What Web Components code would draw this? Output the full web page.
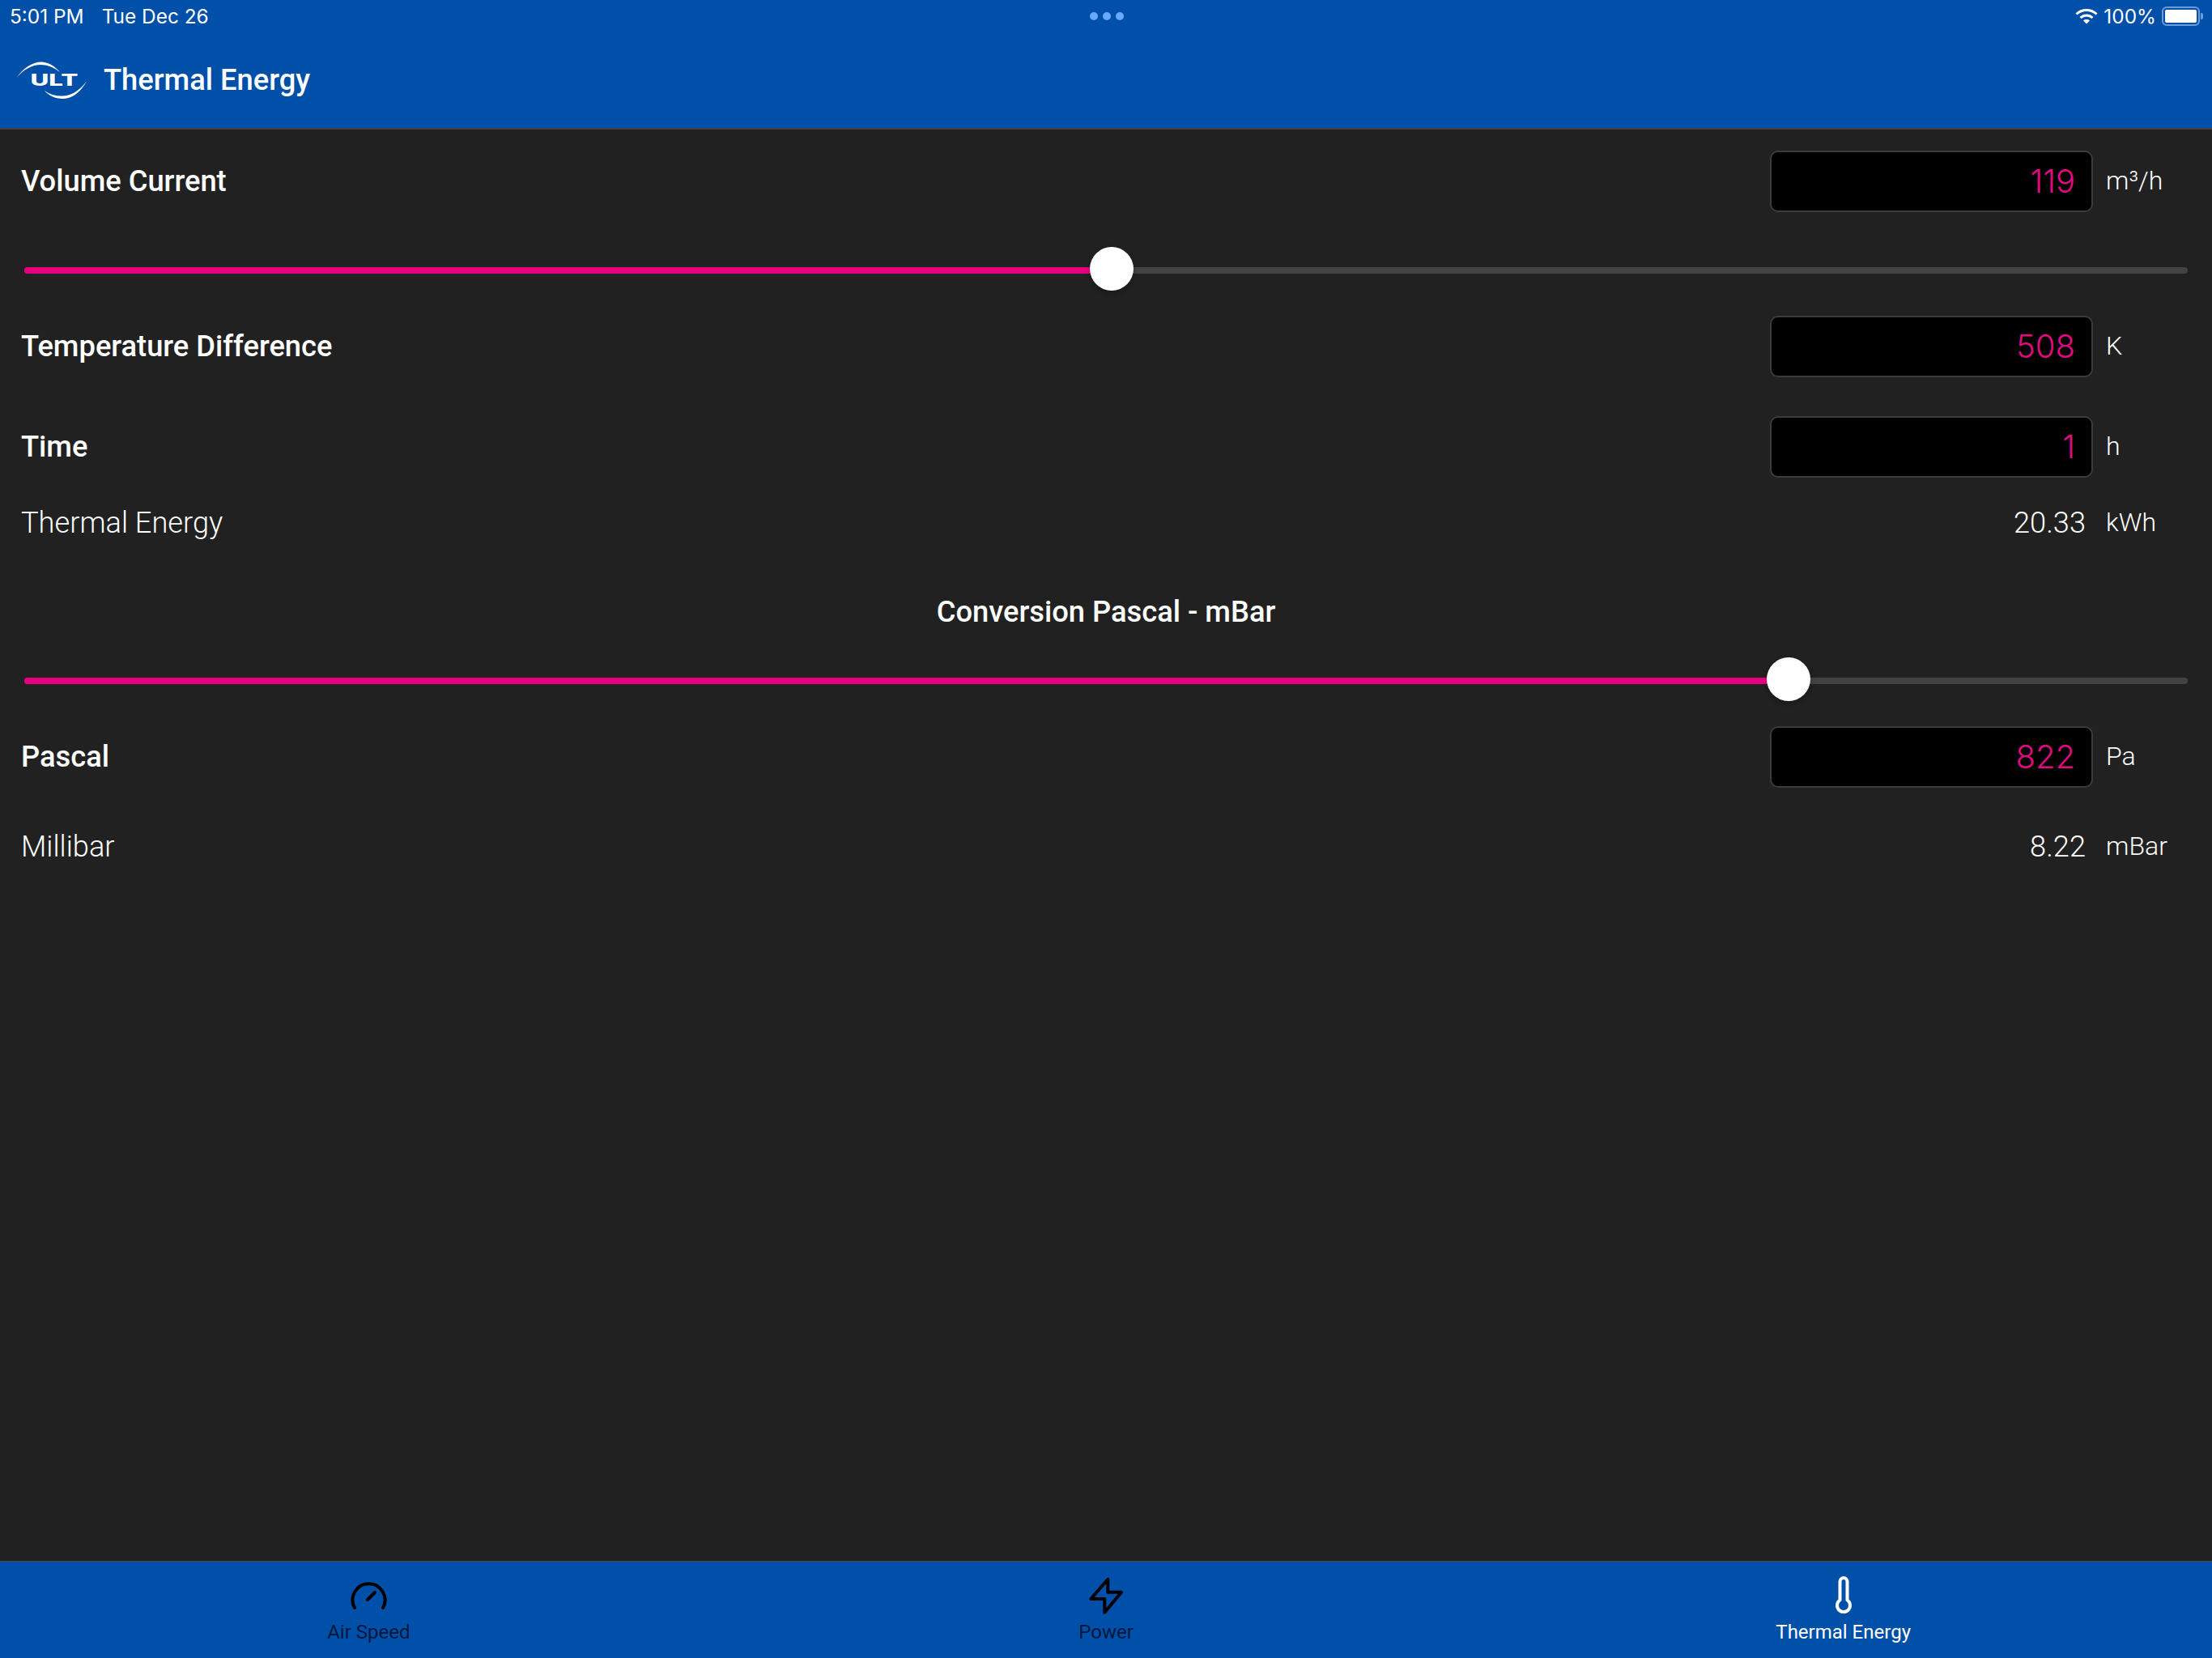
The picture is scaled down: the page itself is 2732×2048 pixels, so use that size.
<!DOCTYPE html>
<html lang="en">
<head>
<meta charset="utf-8">
<title>Thermal Energy</title>
<style>
  html, body { margin: 0; height: 100%; background: #212121; }
  body { font-family: Roboto, "Liberation Sans", sans-serif; color: #fff; }
  app-shell { height: 2048px; }
  .r1 { margin-top: 26px; }
  .s1 { margin-top: 43px; }
  .r2 { margin-top: 31px; }
  .r3 { margin-top: 48px; }
  .o1 { margin-top: 35px; }
  .h1 { margin-top: 71px; }
  .s2 { margin-top: 36px; }
  .r4 { margin-top: 31px; }
  .o2 { margin-top: 52px; }
</style>
</head>
<body>
<app-shell>
  <app-header slot="header" heading="Thermal Energy"></app-header>
  <input-row class="r1" label="Volume Current" value="119" unit="m³/h"></input-row>
  <range-bar class="s1" position="1373" ></range-bar>
  <input-row class="r2" label="Temperature Difference" value="508" unit="K"></input-row>
  <input-row class="r3" label="Time" value="1" unit="h"></input-row>
  <output-row class="o1" label="Thermal Energy" value="20.33" unit="kWh"></output-row>
  <section-title class="h1">Conversion Pascal - mBar</section-title>
  <range-bar class="s2" position="2209"></range-bar>
  <input-row class="r4" label="Pascal" value="822" unit="Pa"></input-row>
  <output-row class="o2" label="Millibar" value="8.22" unit="mBar"></output-row>
  <tab-bar slot="footer">
    <tab-item label="Air Speed">
      <svg viewBox="0 0 48 48" fill="none" stroke="currentColor" stroke-width="4" stroke-linecap="round" stroke-linejoin="round"><path d="M7 40A20 20 0 1 1 42 40"/><path d="M23 30L32 21"/></svg>
    </tab-item>
    <tab-item label="Power">
      <svg viewBox="0 0 48 48" fill="none" stroke="currentColor" stroke-width="4" stroke-linecap="round" stroke-linejoin="round"><path d="M26.3 4.7L5.3 29H22.3V45.7L43 20.7H26.3Z"/></svg>
    </tab-item>
    <tab-item label="Thermal Energy" active>
      <svg viewBox="0 0 48 48" fill="none" stroke="currentColor" stroke-width="4" stroke-linejoin="round"><path d="M19.5 30.4V7.5a4.5 4.5 0 0 1 9 0V30.4A8 8 0 1 1 19.5 30.4Z"/></svg>
    </tab-item>
  </tab-bar>
</app-shell>

<script>
class AppShell extends HTMLElement {
  constructor() {
    super();
    this.attachShadow({ mode: 'open' });
    this.shadowRoot.innerHTML = `
      <style>
        :host { display: flex; flex-direction: column; background: #212121; overflow: hidden; }
        main { flex: 1; display: flex; flex-direction: column; }
      </style>
      <slot name="header"></slot>
      <main><slot></slot></main>
      <slot name="footer"></slot>
    `;
  }
}

class AppHeader extends HTMLElement {
  constructor() {
    super();
    this.attachShadow({ mode: 'open' });
    this.shadowRoot.innerHTML = `
      <style>
        :host { display: block; height: 158px; background: #004fa9; border-bottom: 2px solid #414141; color: #fff; }
        .status { height: 40px; display: grid; grid-template-columns: 1fr auto 1fr; align-items: center; font: 400 24.4px Inter, Roboto, sans-serif; padding: 0 11px 0 12px; }
        .time { display: flex; gap: 22px; }
        .dots { display: flex; gap: 6px; }
        .dots i { width: 10px; height: 10px; border-radius: 50%; background: #66aaff; }
        .right { display: flex; justify-content: flex-end; align-items: center; gap: 7px; }
        .battery { display: flex; align-items: center; }
        .cell { width: 47px; height: 24px; box-sizing: border-box; border: 2px solid #6b9bd8; border-radius: 6px; padding: 2px; }
        .cell i { display: block; height: 100%; background: #fff; border-radius: 2px; }
        .nub { width: 3px; height: 8px; background: #6b9bd8; border-radius: 0 2px 2px 0; margin-left: 1px; }
        .bar { height: 118px; display: flex; align-items: center; gap: 20px; padding: 0 0 1px 20px; box-sizing: border-box; }
        .title { font: 500 36.3px Roboto, sans-serif; }
      </style>
      <div class="status">
        <div class="time"><span>5:01 PM</span><span>Tue Dec 26</span></div>
        <div class="dots"><i></i><i></i><i></i></div>
        <div class="right">
          <svg width="28" height="20" viewBox="0 0 28 20" fill="none" stroke="#fff" stroke-width="3"><path d="M1.5 7.5C8.5 .8 19.5 .8 26.5 7.5"/><path d="M6.5 12C10.8 8 17.2 8 21.5 12"/><path d="M14 19.5L10 15.5C12.3 13.6 15.7 13.6 18 15.5Z" fill="#fff" stroke="none"/></svg>
          <span>100%</span>
          <div class="battery"><div class="cell"><i></i></div><div class="nub"></div></div>
        </div>
      </div>
      <div class="bar">
        <svg width="88" height="46" viewBox="20 76 88 46">
          <path fill="#fff" d="M20 97C28 84 41 76 52 76.500C60 77 68 82 74 89C66 83 58 80 50 80C40 80 28 86 20 97Z"/>
          <path fill="#fff" d="M55 112C62 117 70 119 78 118.500C90 118 100 110 107 100C101 112 90 122 78 122C68 122 60 118 55 112Z"/>
          <text x="37.500" y="106" textLength="59" lengthAdjust="spacingAndGlyphs" fill="#fff" font-family="Inter, Roboto, sans-serif" font-weight="800" font-size="20">ULT</text>
        </svg>
        <span class="title"></span>
      </div>
    `;
    this.shadowRoot.querySelector('.title').textContent = this.getAttribute('heading');
  }
}

class InputRow extends HTMLElement {
  constructor() {
    super();
    this.attachShadow({ mode: 'open' });
    this.shadowRoot.innerHTML = `
      <style>
        :host { display: flex; align-items: center; height: 76px; padding-left: 26px; }
        .label { flex: 1; font: 500 36.3px Roboto, sans-serif; color: #fff; margin-top: -1px; }
        .field { width: 399px; height: 76px; box-sizing: border-box; background: #000; border: 2px solid #3b3b3b; border-radius: 10px; display: flex; align-items: center; justify-content: flex-end; padding: 0 20px 2px 0; color: #e20a80; font: 300 40px Inter, Roboto, sans-serif; }
        .unit { width: 147px; box-sizing: border-box; padding: 0 0 2px 16px; font: 340 32px Roboto, sans-serif; color: #fff; }
      </style>
      <div class="label"></div>
      <div class="field"></div>
      <div class="unit"></div>
    `;
    this.shadowRoot.querySelector('.label').textContent = this.getAttribute('label');
    this.shadowRoot.querySelector('.field').textContent = this.getAttribute('value');
    this.shadowRoot.querySelector('.unit').textContent = this.getAttribute('unit');
  }
}

class OutputRow extends HTMLElement {
  constructor() {
    super();
    this.attachShadow({ mode: 'open' });
    this.shadowRoot.innerHTML = `
      <style>
        :host { display: flex; align-items: center; height: 40px; padding-left: 26px; color: #fff; }
        .label { flex: 1; font: 340 36.2px Roboto, sans-serif; }
        .value { font: 340 36.2px Roboto, sans-serif; }
        .unit { width: 156px; box-sizing: border-box; padding-left: 25px; font: 340 32px Roboto, sans-serif; }
      </style>
      <div class="label"></div>
      <div class="value"></div>
      <div class="unit"></div>
    `;
    this.shadowRoot.querySelector('.label').textContent = this.getAttribute('label');
    this.shadowRoot.querySelector('.value').textContent = this.getAttribute('value');
    this.shadowRoot.querySelector('.unit').textContent = this.getAttribute('unit');
  }
}

class SectionTitle extends HTMLElement {
  constructor() {
    super();
    this.attachShadow({ mode: 'open' });
    this.shadowRoot.innerHTML = `
      <style>
        :host { display: block; height: 40px; text-align: center; font: 500 36.3px/40px Roboto, sans-serif; color: #fff; }
      </style>
      <slot></slot>
    `;
  }
}

class RangeBar extends HTMLElement {
  constructor() {
    super();
    this.attachShadow({ mode: 'open' });
    this.shadowRoot.innerHTML = `
      <style>
        :host { display: flex; align-items: center; height: 54px; margin: 0 30px; }
        .track { flex: 1; height: 8px; margin-top: 4px; border-radius: 4px; background: #434345; position: relative; }
        .fill { height: 100%; border-radius: 4px 0 0 4px; background: #e6007e; }
        .thumb { position: absolute; top: 50%; width: 54px; height: 54px; margin: -29px 0 0 -27px; border-radius: 50%; background: #fff; box-shadow: 0 3px 6px rgba(0,0,0,.25); }
      </style>
      <div class="track"><div class="fill"></div><div class="thumb"></div></div>
    `;
    const x = Number(this.getAttribute('position')) - 30;
    this.shadowRoot.querySelector('.fill').style.width = x + 'px';
    this.shadowRoot.querySelector('.thumb').style.left = x + 'px';
  }
}

class TabBar extends HTMLElement {
  constructor() {
    super();
    this.attachShadow({ mode: 'open' });
    this.shadowRoot.innerHTML = `
      <style>
        :host { display: grid; grid-template-columns: repeat(3, 1fr); height: 118px; background: #004fa9; border-top: 2px solid #2d4a70; }
      </style>
      <slot></slot>
    `;
  }
}

class TabItem extends HTMLElement {
  constructor() {
    super();
    this.attachShadow({ mode: 'open' });
    this.shadowRoot.innerHTML = `
      <style>
        :host { display: flex; flex-direction: column; align-items: center; padding-top: 16px; color: #000; }
        :host([active]) { color: #fff; }
        ::slotted(svg) { width: 48px; height: 48px; display: block; }
        .label { margin-top: 7px; font: 400 24px/30px Roboto, sans-serif; color: #00173d; }
        :host([active]) .label { color: #fff; }
      </style>
      <slot></slot>
      <div class="label"></div>
    `;
    this.shadowRoot.querySelector('.label').textContent = this.getAttribute('label');
  }
}

customElements.define('app-shell', AppShell);
customElements.define('app-header', AppHeader);
customElements.define('input-row', InputRow);
customElements.define('output-row', OutputRow);
customElements.define('section-title', SectionTitle);
customElements.define('range-bar', RangeBar);
customElements.define('tab-bar', TabBar);
customElements.define('tab-item', TabItem);
</script>
</body>
</html>
